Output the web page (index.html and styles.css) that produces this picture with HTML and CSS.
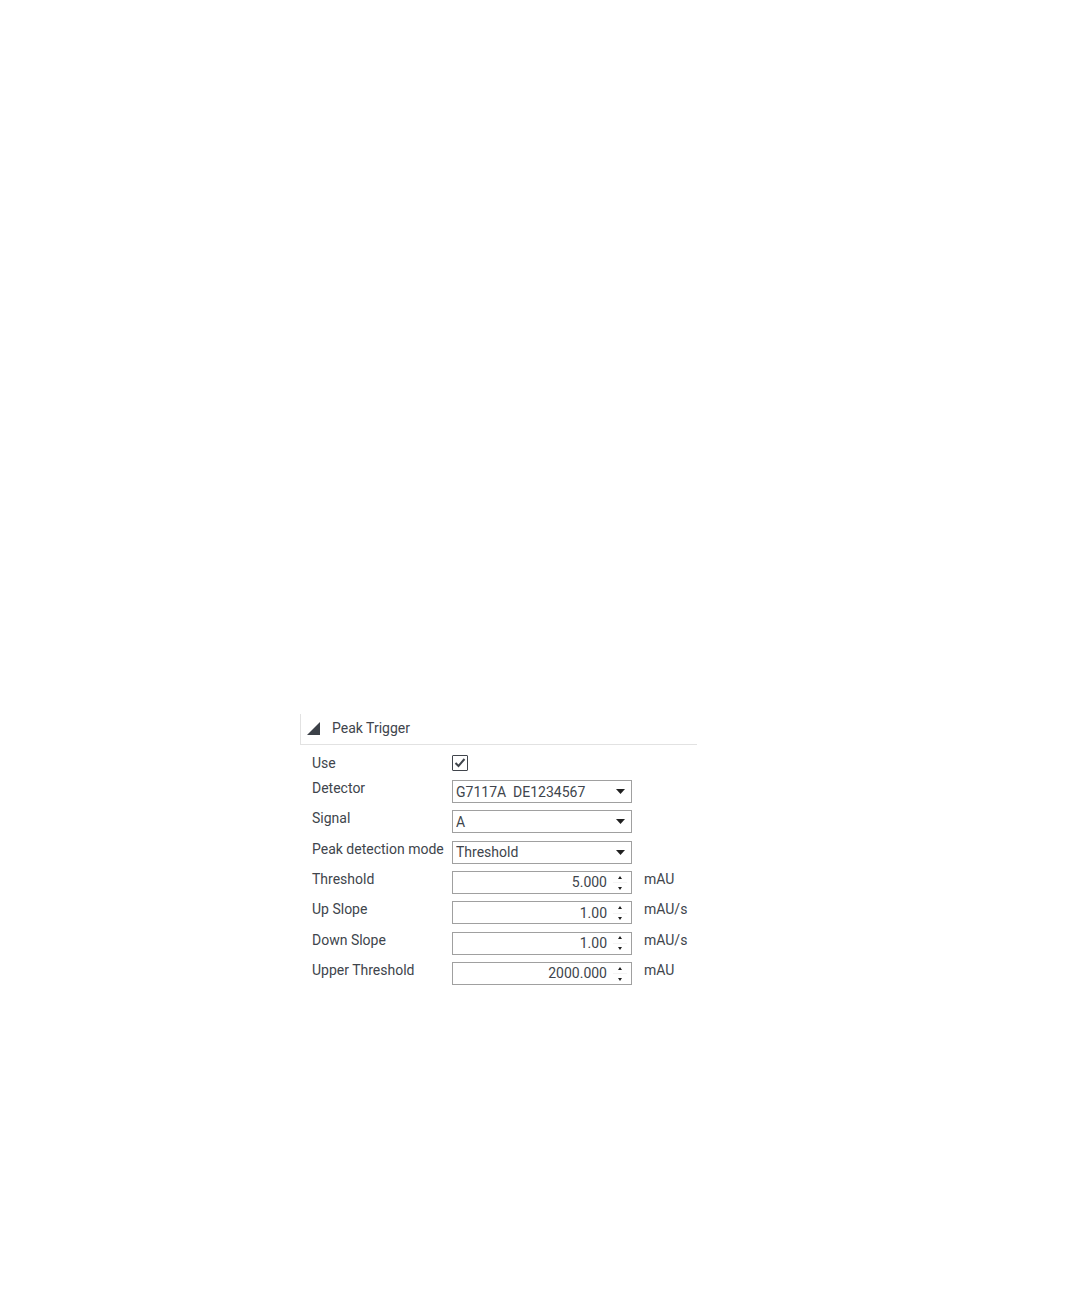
FILE: index.html
```html
<!DOCTYPE html>
<html lang="en">
<head>
    <meta charset="UTF-8">
    <meta name="viewport" content="width=device-width, initial-scale=1.0">
    <title>Peak Trigger</title>
    <link rel="stylesheet" href="styles.css">
</head>
<body>
    <main class="page">
        <section class="panel">
            <h2 class="panel-header">
                <button type="button" class="panel-toggle" aria-expanded="true">
                    <svg class="toggle-icon" viewBox="0 0 13 13" aria-hidden="true"><path d="M13 0V13H0Z"/></svg>
                    Peak Trigger
                </button>
            </h2>
            <form class="panel-body">
                <div class="row use-row">
                    <label for="use">Use</label>
                    <input type="checkbox" id="use" class="checkbox" checked>
                </div>
                <div class="fields">
                    <div class="row">
                        <label for="detector">Detector</label>
                        <select id="detector" class="select">
                            <option>G7117A&nbsp; DE1234567</option>
                        </select>
                    </div>
                    <div class="row">
                        <label for="signal">Signal</label>
                        <select id="signal" class="select">
                            <option>A</option>
                        </select>
                    </div>
                    <div class="row">
                        <label for="mode">Peak detection mode</label>
                        <select id="mode" class="select">
                            <option>Threshold</option>
                        </select>
                    </div>
                    <div class="row">
                        <label for="threshold">Threshold</label>
                        <div class="spinner">
                            <input type="number" id="threshold" value="5.000" step="0.001">
                            <div class="spin-buttons">
                                <button type="button" aria-label="Increase"><svg viewBox="0 0 4 3"><path d="M0 3L2 0L4 3Z"/></svg></button>
                                <button type="button" aria-label="Decrease"><svg viewBox="0 0 4 3"><path d="M0 0H4L2 3Z"/></svg></button>
                            </div>
                        </div>
                        <span class="unit">mAU</span>
                    </div>
                    <div class="row">
                        <label for="up-slope">Up Slope</label>
                        <div class="spinner">
                            <input type="number" id="up-slope" value="1.00" step="0.01">
                            <div class="spin-buttons">
                                <button type="button" aria-label="Increase"><svg viewBox="0 0 4 3"><path d="M0 3L2 0L4 3Z"/></svg></button>
                                <button type="button" aria-label="Decrease"><svg viewBox="0 0 4 3"><path d="M0 0H4L2 3Z"/></svg></button>
                            </div>
                        </div>
                        <span class="unit">mAU/s</span>
                    </div>
                    <div class="row">
                        <label for="down-slope">Down Slope</label>
                        <div class="spinner">
                            <input type="number" id="down-slope" value="1.00" step="0.01">
                            <div class="spin-buttons">
                                <button type="button" aria-label="Increase"><svg viewBox="0 0 4 3"><path d="M0 3L2 0L4 3Z"/></svg></button>
                                <button type="button" aria-label="Decrease"><svg viewBox="0 0 4 3"><path d="M0 0H4L2 3Z"/></svg></button>
                            </div>
                        </div>
                        <span class="unit">mAU/s</span>
                    </div>
                    <div class="row">
                        <label for="upper-threshold">Upper Threshold</label>
                        <div class="spinner">
                            <input type="number" id="upper-threshold" value="2000.000" step="0.001">
                            <div class="spin-buttons">
                                <button type="button" aria-label="Increase"><svg viewBox="0 0 4 3"><path d="M0 3L2 0L4 3Z"/></svg></button>
                                <button type="button" aria-label="Decrease"><svg viewBox="0 0 4 3"><path d="M0 0H4L2 3Z"/></svg></button>
                            </div>
                        </div>
                        <span class="unit">mAU</span>
                    </div>
                </div>
            </form>
        </section>
    </main>

    <script>
        // Step the value of a spinner up or down
        document.querySelectorAll('.spinner').forEach(spinner => {
            const input = spinner.querySelector('input');
            const decimals = input.step.split('.')[1].length;
            const [up, down] = spinner.querySelectorAll('button');

            up.onclick = () => input.value = (Number(input.value) + 1).toFixed(decimals);
            down.onclick = () => input.value = (Number(input.value) - 1).toFixed(decimals);
        });

        // Collapse and expand the panel
        const toggle = document.querySelector('.panel-toggle');
        toggle.onclick = () => {
            const body = document.querySelector('.panel-body');
            body.hidden = !body.hidden;
            toggle.setAttribute('aria-expanded', !body.hidden);
        };
    </script>
</body>
</html>
```
FILE: styles.css
```css
:root {
    --text: #40454c;
    --icon: #3c4148;
    --border: #a0a0a0;
    --line: #e2e2e2;
}
* {
    box-sizing: border-box;
}
body {
    margin: 0;
    background-color: #ffffff;
    color: var(--text);
    font-family: Roboto, "Liberation Sans", sans-serif;
    font-size: 14px;
    line-height: 16px;
}
input, select, button {
    font: inherit;
    color: inherit;
}
.page {
    padding: 714px 16px 0 300px;
}
.panel {
    max-width: 397px;
}
.panel-header {
    margin: 0;
    border-left: 1px solid var(--line);
    border-bottom: 1px solid var(--line);
    font-size: 14px;
    font-weight: 400;
}
.panel-toggle {
    display: flex;
    align-items: center;
    gap: 12px;
    width: 100%;
    padding: 6px 6px 8px;
    border: none;
    background: none;
    text-align: left;
    cursor: pointer;
}
.toggle-icon {
    width: 13px;
    height: 13px;
    fill: var(--icon);
}
.panel-body {
    padding: 10px 0 0 12px;
}
.row {
    display: grid;
    grid-template-columns: 128px minmax(0, 180px) auto;
    justify-content: start;
    align-items: start;
    column-gap: 12px;
    white-space: nowrap;
}
.use-row {
    margin-bottom: 9px;
}
.fields {
    display: flex;
    flex-direction: column;
    justify-content: space-between;
    min-height: 205px;
}
.checkbox {
    appearance: none;
    width: 16px;
    height: 16px;
    margin: 0;
    border: 1px solid #40454c;
    border-radius: 1px;
}
.checkbox:checked {
    background: url("data:image/svg+xml,%3Csvg xmlns='http://www.w3.org/2000/svg' viewBox='0 0 14 14'%3E%3Cpath d='M2.5 7L5.5 10L11.5 3' fill='none' stroke='%2340454c' stroke-width='2'/%3E%3C/svg%3E") center / 14px no-repeat;
}
.select {
    appearance: none;
    width: 100%;
    height: 23px;
    padding: 0 24px 0 3px;
    border: 1px solid var(--border);
    border-radius: 0;
    background: url("data:image/svg+xml,%3Csvg xmlns='http://www.w3.org/2000/svg' viewBox='0 0 9 5'%3E%3Cpath d='M0 0H9L4.5 5Z' fill='%23202020'/%3E%3C/svg%3E") right 6px center / 9px 5px no-repeat #ffffff;
}
.spinner {
    display: flex;
    height: 23px;
    border: 1px solid var(--border);
}
.spinner input {
    flex: 1;
    min-width: 0;
    padding: 0 6px 0 3px;
    border: none;
    outline: none;
    background: none;
    text-align: right;
    appearance: textfield;
}
.spinner input::-webkit-inner-spin-button {
    appearance: none;
    margin: 0;
}
.spin-buttons {
    display: grid;
    grid-template-rows: 1fr 1fr;
    width: 18px;
    padding-right: 4px;
}
.spin-buttons button {
    display: flex;
    align-items: center;
    justify-content: center;
    padding: 0;
    border: none;
    background: none;
}
.spin-buttons button + button {
    border-top: 1px solid #f4f4f4;
}
.spin-buttons svg {
    width: 4px;
    height: 3px;
    fill: #202020;
}
```
